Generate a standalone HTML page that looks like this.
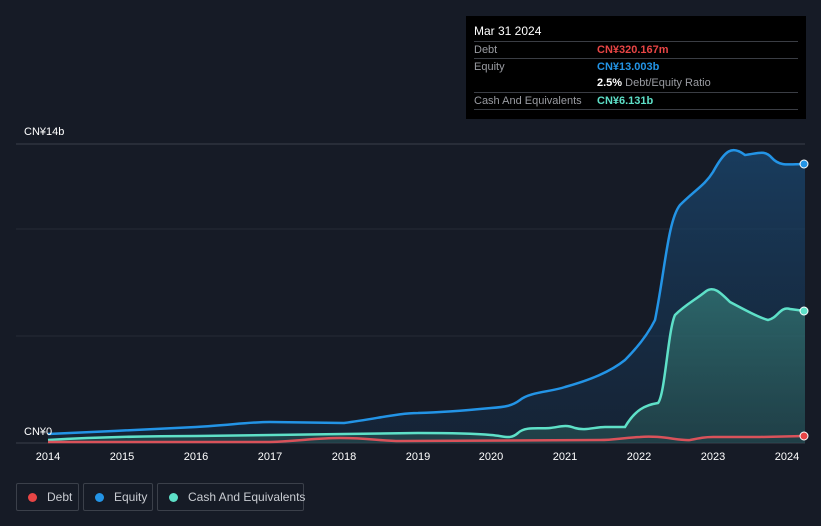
<!DOCTYPE html>
<html><head><style>
body{margin:0;width:821px;height:526px;background:#161b26;font-family:"Liberation Sans","Noto Sans CJK SC",sans-serif;position:relative;overflow:hidden}
.tt{position:absolute;left:466px;top:16px;width:340px;height:103px;background:#000;color:#fff;font-size:11px}
.row{position:absolute;left:8px;width:324px;border-top:1px solid #3a3d44;height:16px;line-height:16px}
.l{color:#9a9ca2}
.v{position:absolute;left:123px;top:0;font-weight:bold}
.lg{position:absolute;top:483px;height:28px;box-sizing:border-box;border:1px solid #3b404a;border-radius:2px;color:#c9ccd2;font-size:12px;line-height:26px;white-space:nowrap}
.dot{display:inline-block;width:9px;height:9px;border-radius:50%;margin:0 10px 0 11px;vertical-align:-1px}
</style></head><body>
<div class="tt">
<div style="position:absolute;left:8px;top:8px;font-size:12px">Mar 31 2024</div>
<div class="row" style="top:25px"><span class="l">Debt</span><span class="v" style="color:#e84545">CN¥320.167m</span></div>
<div class="row" style="top:42px"><span class="l">Equity</span><span class="v" style="color:#2394e6">CN¥13.003b</span></div>
<div class="row" style="top:59px;border-top:none"><span class="v" style="color:#fff">2.5% <span style="color:#9a9ca2;font-weight:normal">Debt/Equity Ratio</span></span></div>
<div class="row" style="top:76px"><span class="l">Cash And Equivalents</span><span class="v" style="color:#5ee0c8">CN¥6.131b</span></div>
<div class="row" style="top:93px"></div>
</div>
<svg width="821" height="526" style="position:absolute;left:0;top:0">
<line x1="16" y1="144" x2="805" y2="144" stroke="#3a3f4a"/>
<line x1="16" y1="229" x2="805" y2="229" stroke="#262b36"/>
<line x1="16" y1="336" x2="805" y2="336" stroke="#262b36"/>
<line x1="16" y1="443" x2="805" y2="443" stroke="#3a3f4a"/>
<defs><linearGradient id="g1" x1="0" y1="0" x2="0" y2="1"><stop offset="0" stop-color="#1a4a75" stop-opacity=".7"/><stop offset="1" stop-color="#14304d" stop-opacity=".4"/></linearGradient>
<linearGradient id="g2" x1="0" y1="0" x2="0" y2="1"><stop offset="0" stop-color="#3a8a80" stop-opacity=".6"/><stop offset="1" stop-color="#2a5a58" stop-opacity=".5"/></linearGradient></defs>
<path d="M48,434 C90,432 160,429 196,427 C230,425 250,422 270,422 L344,423 C380,418 400,413 418,413 C450,412 470,410 491,408 C505,407 512,406 520,400 C530,392 550,392 565,387 C590,380 610,372 625,360 C640,345 650,330 655,320 C665,270 668,220 680,205 C695,190 705,185 713,172 C725,150 732,145 745,155 C760,153 765,150 772,158 C780,167 790,164 805,164 L805,443 L48,443Z" fill="url(#g1)"/>
<path d="M48,440 C100,437 150,436 196,436 L344,434 L418,433 C460,433 480,434 491,435 C505,436 510,440 518,433 C525,426 540,429 550,428 C560,427 565,424 575,428 C585,431 595,427 605,427 L625,427 C635,410 645,405 658,403 C665,395 668,330 675,315 C685,305 695,300 705,292 C713,285 720,292 730,302 C745,310 760,318 768,320 C778,318 780,306 790,309 L805,311 L805,443 L48,443Z" fill="url(#g2)"/>
<path d="M48,434 C90,432 160,429 196,427 C230,425 250,422 270,422 L344,423 C380,418 400,413 418,413 C450,412 470,410 491,408 C505,407 512,406 520,400 C530,392 550,392 565,387 C590,380 610,372 625,360 C640,345 650,330 655,320 C665,270 668,220 680,205 C695,190 705,185 713,172 C725,150 732,145 745,155 C760,153 765,150 772,158 C780,167 790,164 805,164" fill="none" stroke="#2394e6" stroke-width="2.5"/>
<path d="M48,440 C100,437 150,436 196,436 L344,434 L418,433 C460,433 480,434 491,435 C505,436 510,440 518,433 C525,426 540,429 550,428 C560,427 565,424 575,428 C585,431 595,427 605,427 L625,427 C635,410 645,405 658,403 C665,395 668,330 675,315 C685,305 695,300 705,292 C713,285 720,292 730,302 C745,310 760,318 768,320 C778,318 780,306 790,309 L805,311" fill="none" stroke="#5ee0c8" stroke-width="2.5"/>
<path d="M48,442 L270,442 C300,441 315,438 340,438 C370,438 380,441 400,441 L600,440 C615,440 620,438 640,437 C660,435 680,441 690,440 C700,438 705,437 713,437 L760,437 L805,436" fill="none" stroke="#d9525a" stroke-width="2.5"/>
<circle cx="804" cy="164" r="4" fill="#2394e6" stroke="#fff" stroke-width="1"/>
<circle cx="804" cy="311" r="4" fill="#5ee0c8" stroke="#fff" stroke-width="1"/>
<circle cx="804" cy="436" r="4" fill="#e84545" stroke="#fff" stroke-width="1"/>
<g fill="#fff" font-size="11" font-family="Liberation Sans,Noto Sans CJK SC,sans-serif">
<text x="24" y="135">CN¥14b</text><text x="24" y="435">CN¥0</text>
<g text-anchor="middle"><text x="48" y="460">2014</text><text x="122" y="460">2015</text><text x="196" y="460">2016</text><text x="270" y="460">2017</text><text x="344" y="460">2018</text><text x="418" y="460">2019</text><text x="491" y="460">2020</text><text x="565" y="460">2021</text><text x="639" y="460">2022</text><text x="713" y="460">2023</text><text x="787" y="460">2024</text></g>
</g>
</svg>
<div class="lg" style="left:16px;width:63px"><span class="dot" style="background:#e84545"></span>Debt</div>
<div class="lg" style="left:83px;width:70px"><span class="dot" style="background:#2394e6"></span>Equity</div>
<div class="lg" style="left:157px;width:147px"><span class="dot" style="background:#5ee0c8"></span>Cash And Equivalents</div>
</body></html>
